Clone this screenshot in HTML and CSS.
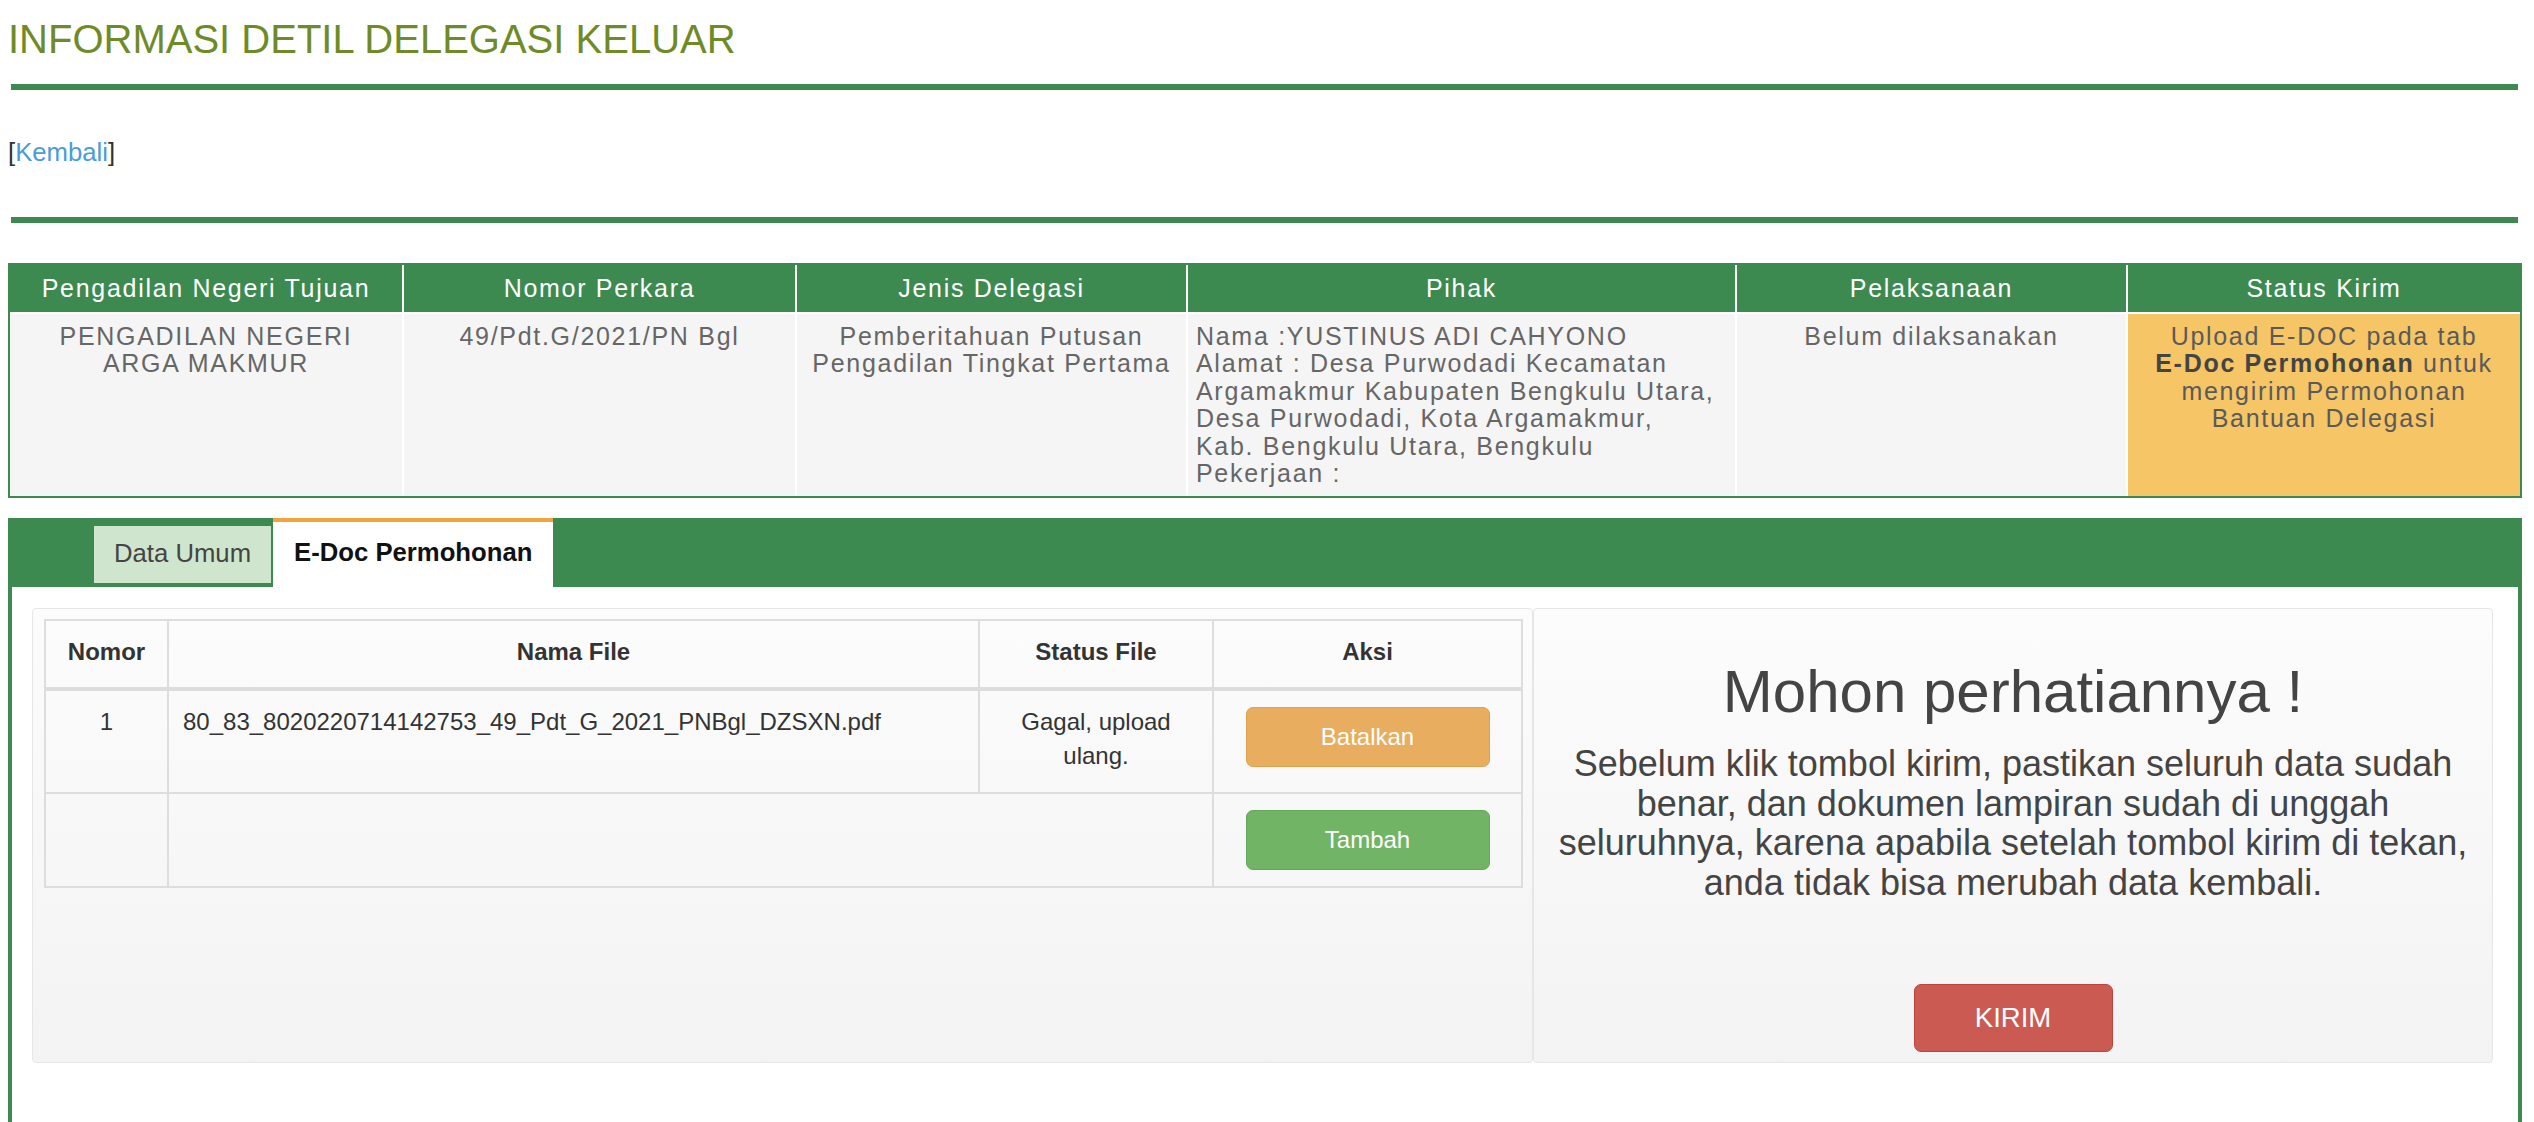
FILE: index.html
```html
<!DOCTYPE html>
<html lang="id">
<head>
<meta charset="utf-8">
<title>Informasi Detil Delegasi Keluar</title>
<link rel="stylesheet" href="styles.css">
</head>
<body>
<div class="page">
  <h3 class="title">INFORMASI DETIL DELEGASI KELUAR</h3>
  <hr class="rule rule-top">
  <p class="back">[<a href="#">Kembali</a>]</p>
  <hr class="rule rule-bottom">

  <table class="info">
    <colgroup>
      <col class="w-392"><col class="w-393"><col class="w-391"><col class="w-549"><col class="w-391"><col>
    </colgroup>
    <thead>
      <tr>
        <th>Pengadilan Negeri Tujuan</th>
        <th>Nomor Perkara</th>
        <th>Jenis Delegasi</th>
        <th>Pihak</th>
        <th>Pelaksanaan</th>
        <th>Status Kirim</th>
      </tr>
    </thead>
    <tbody>
      <tr>
        <td>PENGADILAN NEGERI<br>ARGA MAKMUR</td>
        <td>49/Pdt.G/2021/PN Bgl</td>
        <td>Pemberitahuan Putusan<br>Pengadilan Tingkat Pertama</td>
        <td class="party">Nama :YUSTINUS ADI CAHYONO<br>Alamat : Desa Purwodadi Kecamatan<br>Argamakmur Kabupaten Bengkulu Utara,<br>Desa Purwodadi, Kota Argamakmur,<br>Kab. Bengkulu Utara, Bengkulu<br>Pekerjaan :</td>
        <td>Belum dilaksanakan</td>
        <td class="status">Upload E-DOC pada tab<br><b>E-Doc Permohonan</b> untuk<br>mengirim Permohonan<br>Bantuan Delegasi</td>
      </tr>
    </tbody>
  </table>

  <div class="panel">
    <div class="tabs">
      <div class="tab tab-idle">Data Umum</div>
      <div class="tab tab-active">E-Doc Permohonan</div>
    </div>
    <div class="panel-body">
      <div class="well well-files">
        <table class="files">
          <colgroup>
            <col class="f-no"><col class="f-name"><col class="f-status"><col>
          </colgroup>
          <thead>
            <tr>
              <th>Nomor</th>
              <th>Nama File</th>
              <th>Status File</th>
              <th>Aksi</th>
            </tr>
          </thead>
          <tbody>
            <tr>
              <td>1</td>
              <td class="fname">80_83_8020220714142753_49_Pdt_G_2021_PNBgl_DZSXN.pdf</td>
              <td>Gagal, upload ulang.</td>
              <td><button type="button" class="btn btn-warning btn-gap">Batalkan</button></td>
            </tr>
            <tr>
              <td></td>
              <td colspan="2"></td>
              <td><button type="button" class="btn btn-success">Tambah</button></td>
            </tr>
          </tbody>
        </table>
      </div>
      <div class="well well-notice">
        <h1 class="notice-title">Mohon perhatiannya !</h1>
        <p class="notice-text">Sebelum klik tombol kirim, pastikan seluruh data sudah<br>benar, dan dokumen lampiran sudah di unggah<br>seluruhnya, karena apabila setelah tombol kirim di tekan,<br>anda tidak bisa merubah data kembali.</p>
        <button type="button" class="btn-kirim">KIRIM</button>
      </div>
    </div>
  </div>
</div>
</body>
</html>
```

FILE: styles.css
```css
* { box-sizing: border-box; }

html { overflow: hidden; }

body {
  margin: 0;
  background: #fff;
  color: #333;
  font-family: "Liberation Sans", Arial, Helvetica, sans-serif;
}

.page {
  padding: 0 12px 0 8px;
}

.title {
  margin: 17px 0 0;
  font-size: 40px;
  line-height: 44px;
  font-weight: normal;
  color: #6e8b27;
}

.rule {
  border: 0;
  height: 6px;
  background: #3d8a50;
  margin: 0 4px 0 3px;
}

.rule-top { margin-top: 23px; }
.rule-bottom { margin-top: 46px; }

.back {
  margin: 44px 0 0;
  font-size: 25.7px;
  line-height: 36.7px;
  color: #333;
}

.back a {
  color: #4a9bdc;
  text-decoration: none;
}

/* ---------- info table ---------- */
.info {
  margin-top: 40px;
  width: 100%;
  table-layout: fixed;
  border-collapse: separate;
  border-spacing: 0;
  border: 2px solid #3d8a50;
  font-size: 25px;
  line-height: 27.5px;
  letter-spacing: 1.7px;
}

.w-392 { width: 392px; }
.w-393 { width: 393px; }
.w-391 { width: 391px; }
.w-549 { width: 549px; }

.info th {
  background: #3d8a50;
  color: #fff;
  font-weight: normal;
  padding: 10px 8px 9.5px;
  text-align: center;
  white-space: nowrap;
}

.info th + th,
.info td + td {
  border-left: 2px solid #fff;
}

.info td {
  background: #f5f5f5;
  color: #666;
  border-top: 2px solid #fff;
  padding: 9px 8px 8.5px;
  vertical-align: top;
  text-align: center;
  white-space: nowrap;
}

.info td.party { text-align: left; }

.info td.status {
  background: #f5c566;
  color: #5a5a5a;
}

.info td.status b { color: #444; }

/* ---------- panel & tabs ---------- */
.panel {
  margin-top: 20px;
  border-left: 4px solid #3d8a50;
  border-right: 4px solid #3d8a50;
}

.tabs {
  display: flex;
  align-items: flex-start;
  height: 69px;
  padding-left: 80px;
  background: #3d8a50;
}

.tab {
  font-size: 25.7px;
  line-height: 36.7px;
  white-space: nowrap;
}

.tab-idle {
  margin-top: 6px;
  height: 61px;
  padding: 9px 20px 0;
  background: #cfe5cd;
  border: 2px solid #3b8a4e;
  color: #444;
}

.tab-active {
  height: 69px;
  padding: 12px 21px 0;
  background: #fff;
  border-top: 4px solid #f4a23b;
  color: #111;
  font-weight: bold;
}

.panel-body {
  display: flex;
  align-items: stretch;
  padding: 21px 25px 59px 20px;
  background: #fff;
}

.well {
  border: 1px solid #e6e6e6;
  border-radius: 4px;
  background: linear-gradient(#fcfcfc, #f3f3f3);
}

.well-files {
  flex: none;
  width: 1501px;
  padding: 10px 9px 10px 11px;
}

.well-notice {
  flex: 1;
  display: flex;
  flex-direction: column;
  align-items: center;
  padding: 11px 10px 10px;
  text-align: center;
}

/* ---------- files table ---------- */
.files {
  width: 100%;
  table-layout: fixed;
  border-collapse: separate;
  border-spacing: 0;
  border-top: 2px solid #ddd;
  border-left: 2px solid #ddd;
  font-size: 24px;
  line-height: 34.3px;
  color: #333;
}

.f-no { width: 123px; }
.f-name { width: 811px; }
.f-status { width: 234px; }

.files th,
.files td {
  border-right: 2px solid #ddd;
  border-bottom: 2px solid #ddd;
  padding: 14px;
}

.files th {
  border-bottom-width: 4px;
  padding: 14px 14px 17px;
  text-align: center;
  font-weight: bold;
  vertical-align: bottom;
}

.files td {
  text-align: center;
  vertical-align: top;
}

.files td.fname {
  text-align: left;
  white-space: nowrap;
}

.btn {
  display: block;
  width: 244px;
  height: 60px;
  margin: 2px auto;
  padding: 0;
  border: 1px solid;
  border-radius: 7px;
  color: #fff;
  font-family: inherit;
  font-size: 24px;
  line-height: 58px;
  text-align: center;
}

.btn-gap { margin-bottom: 11px; }

.btn-warning {
  background: #e8ad5e;
  border-color: #dfa04e;
}

.btn-success {
  background: #72b465;
  border-color: #62a855;
}

/* ---------- notice ---------- */
.notice-title {
  margin: 38.5px 0 0;
  font-size: 60px;
  line-height: 66px;
  font-weight: normal;
  color: #444;
}

.notice-text {
  margin: 19.5px 0 0;
  font-size: 36px;
  line-height: 39.6px;
  color: #444;
  white-space: nowrap;
}

.btn-kirim {
  width: 199px;
  height: 68px;
  margin-top: 81.6px;
  padding: 0;
  border: 1px solid #c0443d;
  border-radius: 7px;
  background: #cb5a53;
  color: #fff;
  font-family: inherit;
  font-size: 27.5px;
}
```
